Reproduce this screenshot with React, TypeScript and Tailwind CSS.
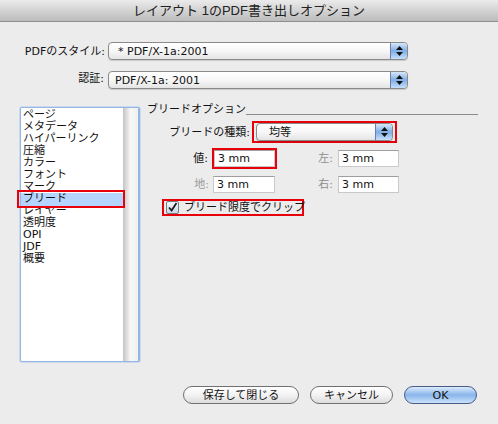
import React from "react";

const Stepper = () => (
  <div className="w-[17px] h-full rounded-r-[4px] border-l border-[#6b7fa8] bg-gradient-to-b from-[#d7e7f9] via-[#7eaee6] to-[#c6defa] flex flex-col items-center justify-center gap-[2px]">
    <svg width="7" height="4" viewBox="0 0 7 4"><polygon points="3.5,0 7,4 0,4" fill="#111" /></svg>
    <svg width="7" height="4" viewBox="0 0 7 4"><polygon points="0,0 7,0 3.5,4" fill="#111" /></svg>
  </div>
);

const Popup = ({ text, className }: { text: string; className?: string }) => (
  <div className={"h-[18px] flex items-stretch rounded-[4px] border border-[#8a8a8a] bg-gradient-to-b from-white via-[#f7f7f7] to-[#e4e4e4] shadow-[0_1px_1px_rgba(0,0,0,0.15)] " + (className ?? "")}>
    <div className="flex-1 flex items-center text-[11px] text-[#111] leading-none whitespace-nowrap">{text}</div>
    <Stepper />
  </div>
);

const Field = ({ className }: { className?: string }) => (
  <div className={"h-[17px] bg-white border border-[#c9c9c9] border-t-[#9e9e9e] flex items-center pl-[3px] text-[11px] leading-none text-[#111] " + (className ?? "")}>
    3 mm
  </div>
);

const items = ["ページ", "メタデータ", "ハイパーリンク", "圧縮", "カラー", "フォント", "マーク", "ブリード", "レイヤー", "透明度", "OPI", "JDF", "概要"];

export default function App() {
  return (
    <div className="w-[498px] h-[424px] bg-[#ececec] font-['DejaVu_Sans','Noto_Sans_CJK_JP',sans-serif] text-[#111] overflow-hidden">
      <div className="h-[22px] bg-gradient-to-b from-[#ebebeb] to-[#bcbcbc] border-b border-[#8e8e8e] flex items-center justify-center text-[13px] text-[#222] leading-none font-['Liberation_Sans','Noto_Sans_CJK_JP',sans-serif]">
        レイアウト 1のPDF書き出しオプション
      </div>

      <div className="mt-[20px] flex items-center h-[18px]">
        <div className="w-[106px] text-right text-[11px] leading-none pr-[1px] whitespace-nowrap">PDFのスタイル:</div>
        <Popup text="* PDF/X-1a:2001" className="ml-[2px] w-[300px] pl-[9px]" />
      </div>
      <div className="mt-[11px] flex items-center h-[18px]">
        <div className="w-[104px] text-right text-[11px] leading-none -mt-[3px]">認証:</div>
        <Popup text="PDF/X-1a: 2001" className="ml-[4px] w-[300px] pl-[6px]" />
      </div>

      <div className="mt-[14px] flex">
        <div className="ml-[20px] mt-[4px] w-[120px] h-[255px] bg-white border border-[#93b6e6] rounded-[2px] flex shadow-[0_0_0_1px_rgba(150,185,235,0.35)]">
          <div className="flex-1 flex flex-col pt-[1px]">
            {items.map((it) =>
              it === "ブリード" ? (
                <div key={it} className="relative h-[12px] flex items-center">
                  <div className="w-full h-[13px] bg-[#b5d5ff] flex items-center pl-[2px] text-[11px] leading-[12px] whitespace-nowrap">{it}</div>
                  <div className="absolute -left-[4px] -right-[2px] -top-[3px] -bottom-[3px] border-2 border-[#e8000b]" />
                </div>
              ) : (
                <div key={it} className="h-[12px] flex items-center pl-[2px] text-[11px] leading-[12px] whitespace-nowrap">{it}</div>
              )
            )}
          </div>
          <div className="w-[16px] h-full bg-gradient-to-r from-[#c4c4c4] via-[#f7f7f7] to-[#f0f0f0] border-r border-[#93b6e6]" />
        </div>

        <div className="ml-[7px] flex-1 flex flex-col">
          <div className="flex h-[14px]">
            <div className="text-[11px] leading-[14px] whitespace-nowrap">ブリードオプション</div>
            <div className="flex-1 h-px bg-[#8c8c8c] mt-[11px] mr-[20px]" />
          </div>

          <div className="mt-[4px] flex items-center h-[22px]">
            <div className="w-[103px] text-right text-[11px] leading-none whitespace-nowrap">ブリードの種類:</div>
            <div className="ml-[2px] border-2 border-[#e8000b] px-[2px] w-[145px] h-[22px] flex items-center">
              <Popup text="均等" className="w-full h-[17px] pl-[12px]" />
            </div>
          </div>

          <div className="mt-[5px] flex items-center h-[21px]">
            <div className="w-[63px] text-right text-[11px] leading-none pr-[2px]">値:</div>
            <div className="ml-[2px] border-2 border-[#e8000b] w-[65px] h-[21px]">
              <Field className="w-full" />
            </div>
            <div className="w-[61px] text-right text-[11px] leading-none text-[#8e8e8e] pr-[5px]">左:</div>
            <Field className="w-[61px]" />
          </div>

          <div className="mt-[7px] flex items-center h-[17px]">
            <div className="w-[66px] text-right text-[11px] leading-none text-[#9a9a9a] pr-[4px]">地:</div>
            <Field className="w-[62px]" />
            <div className="w-[63px] text-right text-[11px] leading-none text-[#8e8e8e] pr-[5px]">右:</div>
            <Field className="w-[61px]" />
          </div>

          <div className="mt-[6px] ml-[15px] border-2 border-[#e8000b] w-[142px] h-[17px] flex items-center">
            <div className="ml-[2px] w-[13px] h-[13px] shrink-0 rounded-[2px] border border-[#7a7a7a] bg-gradient-to-b from-[#f4f8fd] to-[#c9d9ec] flex items-center justify-center">
              <svg width="11" height="11" viewBox="0 0 11 11"><path d="M2 5.5 L4.6 8.5 L9.5 1" stroke="#1a1a1a" strokeWidth="1.8" fill="none" /></svg>
            </div>
            <div className="ml-[5px] text-[11px] leading-none whitespace-nowrap">ブリード限度でクリップ</div>
          </div>
        </div>
      </div>

      <div className="mt-[24px] flex justify-end pr-[21px] gap-[11px]">
        <div className="w-[116px] h-[18px] rounded-full border border-[#707070] bg-gradient-to-b from-white via-[#f3f3f3] to-[#dcdcdc] flex items-center justify-center text-[11px] leading-none">保存して閉じる</div>
        <div className="w-[83px] h-[18px] rounded-full border border-[#707070] bg-gradient-to-b from-white via-[#f3f3f3] to-[#dcdcdc] flex items-center justify-center text-[11px] leading-none">キャンセル</div>
        <div className="w-[73px] h-[18px] rounded-full border border-[#4a5a85] bg-gradient-to-b from-[#dcebfb] via-[#88b5ea] to-[#cbe3fb] flex items-center justify-center text-[11px] leading-none">OK</div>
      </div>
    </div>
  );
}
